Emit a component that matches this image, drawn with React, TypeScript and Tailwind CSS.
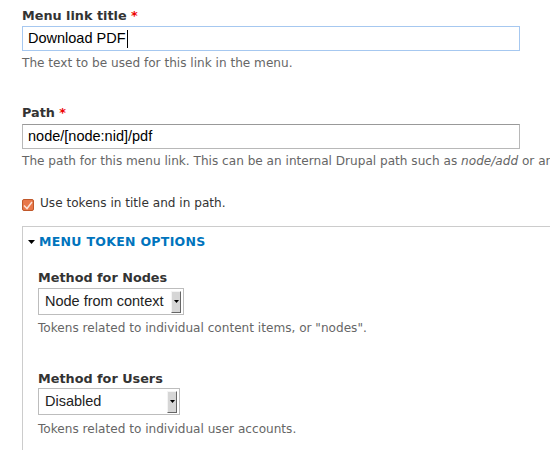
import React from "react";

const sans = { fontFamily: '"DejaVu Sans", sans-serif' };
const arial = { fontFamily: '"Liberation Sans", Arial, sans-serif' };

function Arrow() {
  return (
    <span className="flex h-[22px] w-[10px] items-center justify-center border border-t-[#f4f4f4] border-l-[#f4f4f4] border-r-[#666] border-b-[#666] bg-[#d6d6d6]">
      <svg width="5" height="3" viewBox="0 0 5 3">
        <path d="M0 0H5L2.5 3Z" fill="#000" />
      </svg>
    </span>
  );
}

function Select({ value, width }: { value: string; width: string }) {
  return (
    <div className={`flex h-[27px] items-center justify-between border border-[#bdbdbd] bg-white pl-[6px] pr-[2px] ${width}`}>
      <span className="text-[14.5px] text-[#222]" style={arial}>{value}</span>
      <Arrow />
    </div>
  );
}

export default function App() {
  return (
    <div className="h-[450px] w-[550px] overflow-hidden bg-white pl-[22px] pt-[7px]" style={sans}>
      <div className="text-[12.8px] font-bold leading-[18px] text-[#333]">
        Menu link title <span className="text-[#e00]">*</span>
      </div>
      <div className="mt-[1px] flex h-[25px] w-[498px] items-center border border-[#a6c8f0] pl-[5px] text-[14.5px] text-black" style={arial}>
        Download PDF<span className="ml-[1px] inline-block h-[18px] w-[1px] bg-black" />
      </div>
      <div className="mt-[3px] text-[12.1px] leading-[18px] text-[#666]">The text to be used for this link in the menu.</div>

      <div className="mt-[32px] text-[12.8px] font-bold leading-[18px] text-[#333]">
        Path <span className="text-[#e00]">*</span>
      </div>
      <div className="mt-[2px] flex h-[25px] w-[498px] items-center border border-[#b8b8b8] border-t-[#999] pl-[5px] text-[14.5px] text-black" style={arial}>
        node/[node:nid]/pdf
      </div>
      <div className="mt-[3px] whitespace-nowrap text-[12.1px] leading-[18px] text-[#666]">
        The path for this menu link. This can be an internal Drupal path such as <em>node/add</em> or an external URL such as http://drupal.org.
      </div>

      <div className="mt-[24px] flex gap-[6px]">
        <span className="mt-[5px] flex h-[12px] w-[12px] items-center justify-center rounded-[2px] border border-[#c0582a] bg-[#e8774a]">
          <svg width="10" height="9" viewBox="0 0 10 9">
            <path d="M1 4.5L4 7.5L9 1" stroke="#fbe3d8" strokeWidth="1.5" fill="none" />
          </svg>
        </span>
        <span className="text-[12.1px] leading-[18px] text-[#333]">Use tokens in title and in path.</span>
      </div>

      <div className="mt-[14px] border-l border-t border-[#ccc] pb-[40px] pl-[5px] pt-[6px]">
        <div className="flex items-center gap-[4px]">
          <svg width="7" height="4" viewBox="0 0 7 4">
            <path d="M0 0H7L3.5 4Z" fill="#000" />
          </svg>
          <span className="text-[12.5px] font-bold uppercase leading-[18px] tracking-[0.3px] text-[#0074bd]">Menu token options</span>
        </div>
        <div className="pl-[10px]">
          <div className="mt-[18px] text-[12.8px] font-bold leading-[18px] text-[#333]">Method for Nodes</div>
          <div className="mt-[1px]">
            <Select value="Node from context" width="w-[146px]" />
          </div>
          <div className="mt-[4px] text-[12.1px] leading-[18px] text-[#666]">Tokens related to individual content items, or "nodes".</div>

          <div className="mt-[33px] text-[12.8px] font-bold leading-[18px] text-[#333]">Method for Users</div>
          <div>
            <Select value="Disabled" width="w-[142px]" />
          </div>
          <div className="mt-[5px] text-[12.1px] leading-[18px] text-[#666]">Tokens related to individual user accounts.</div>
        </div>
      </div>
    </div>
  );
}
